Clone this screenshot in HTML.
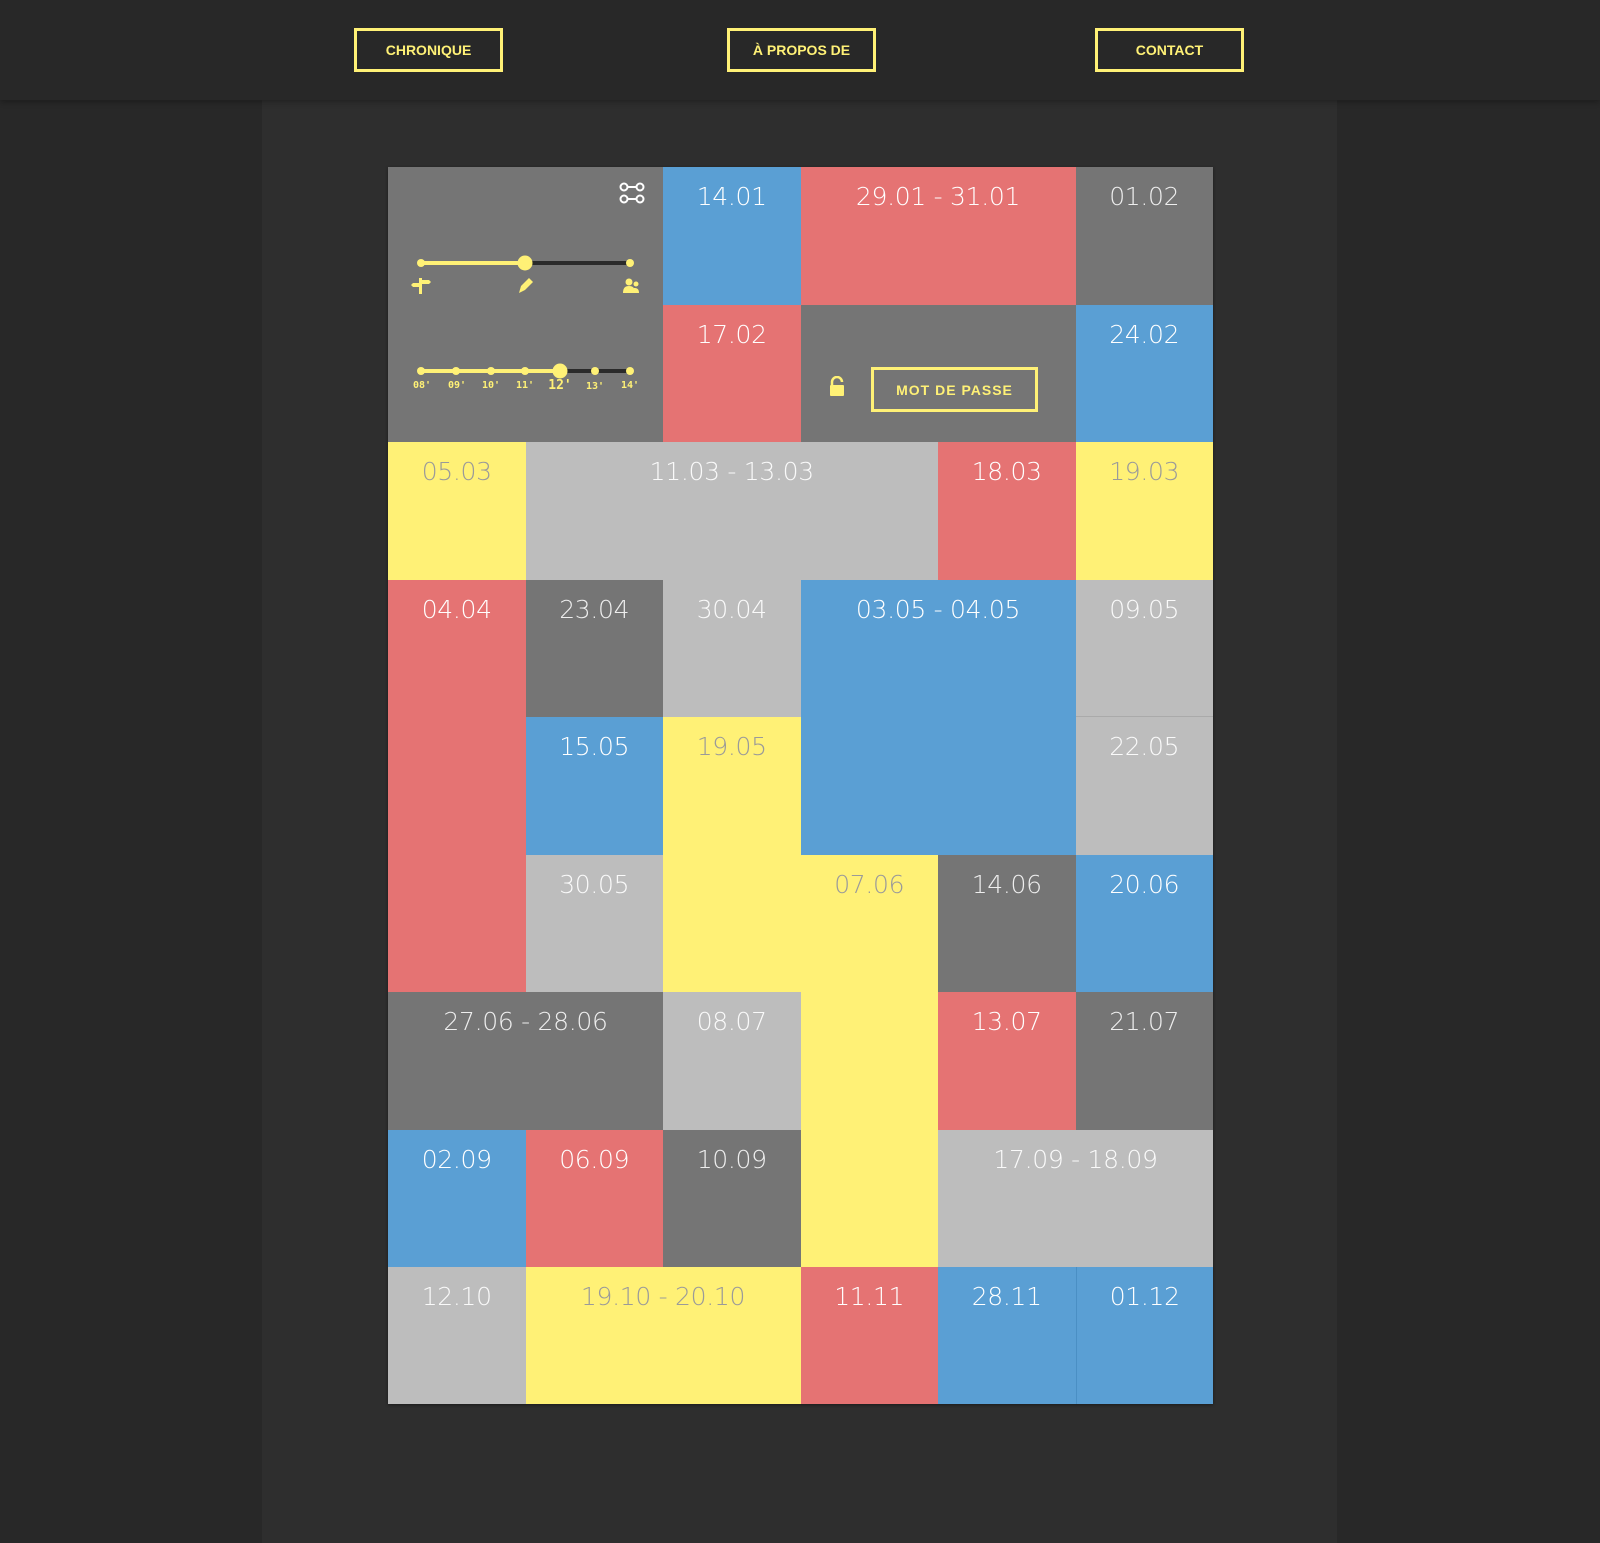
<!DOCTYPE html>
<html><head><meta charset="utf-8"><style>
*{margin:0;padding:0;box-sizing:border-box}
body{width:1600px;height:1543px;background:#282828;position:relative;overflow:hidden;font-family:"Liberation Sans",sans-serif}
.hdr{position:absolute;left:0;top:0;width:1600px;height:100px;background:#282828;box-shadow:0 2px 6px rgba(0,0,0,.3);z-index:2}
.btn{position:absolute;top:28px;width:149px;height:44px;border:3px solid #fff176;color:#fff176;font-weight:bold;font-size:14px;display:flex;align-items:center;justify-content:center}
.main{position:absolute;left:262px;top:100px;width:1075px;height:1443px;background:#2e2e2e}
.c{position:absolute;color:#fff;font-size:27px;text-align:center;padding-top:14px;font-weight:normal}
.b{background:#5a9fd4}.r{background:#e57373}.y{background:#fff176;color:#9a9a9a}.d{background:#757575;color:#eee}.l{background:#bdbdbd;color:#fafafa}
.c span{font-family:"DejaVu Sans",sans-serif;font-weight:200;font-size:25px;letter-spacing:-0.3px}
</style></head><body>
<div class="hdr">
<div class="btn" style="left:354px">CHRONIQUE</div>
<div class="btn" style="left:727px">À PROPOS DE</div>
<div class="btn" style="left:1095px">CONTACT</div>
</div>
<div class="main"></div>
<div id="g" style="position:absolute;left:388px;top:167px;width:825px;height:1237px;box-shadow:0 1px 3px rgba(0,0,0,.4)">
<div class="c d" style="left:0;top:0;width:275px;height:275px"></div>
<div class="c b" style="left:275px;top:0;width:137.5px;height:137.5px"><span>14.01</span></div>
<div class="c r" style="left:412.5px;top:0;width:275px;height:137.5px"><span>29.01 - 31.01</span></div>
<div class="c d" style="left:687.5px;top:0;width:137.5px;height:137.5px"><span>01.02</span></div>
<div class="c r" style="left:275px;top:137.5px;width:137.5px;height:137.5px"><span>17.02</span></div>
<div class="c d" style="left:412.5px;top:137.5px;width:275px;height:137.5px"></div>
<div class="c b" style="left:687.5px;top:137.5px;width:137.5px;height:137.5px"><span>24.02</span></div>
<div class="c y" style="left:0;top:275px;width:137.5px;height:137.5px"><span>05.03</span></div>
<div class="c l" style="left:137.5px;top:275px;width:412.5px;height:137.5px"><span>11.03 - 13.03</span></div>
<div class="c r" style="left:550px;top:275px;width:137.5px;height:137.5px"><span>18.03</span></div>
<div class="c y" style="left:687.5px;top:275px;width:137.5px;height:137.5px"><span>19.03</span></div>
<div class="c r" style="left:0;top:412.5px;width:137.5px;height:412.5px"><span>04.04</span></div>
<div class="c d" style="left:137.5px;top:412.5px;width:137.5px;height:137.5px"><span>23.04</span></div>
<div class="c l" style="left:275px;top:412.5px;width:137.5px;height:137.5px"><span>30.04</span></div>
<div class="c b" style="left:412.5px;top:412.5px;width:275px;height:275px"><span>03.05 - 04.05</span></div>
<div class="c l" style="left:687.5px;top:412.5px;width:137.5px;height:137.5px;border-bottom:1px solid #aaa"><span>09.05</span></div>
<div class="c b" style="left:137.5px;top:550px;width:137.5px;height:137.5px"><span>15.05</span></div>
<div class="c y" style="left:275px;top:550px;width:137.5px;height:275px"><span>19.05</span></div>
<div class="c l" style="left:687.5px;top:550px;width:137.5px;height:137.5px"><span>22.05</span></div>
<div class="c l" style="left:137.5px;top:687.5px;width:137.5px;height:137.5px"><span>30.05</span></div>
<div class="c y" style="left:412.5px;top:687.5px;width:137.5px;height:412.5px"><span>07.06</span></div>
<div class="c d" style="left:550px;top:687.5px;width:137.5px;height:137.5px"><span>14.06</span></div>
<div class="c b" style="left:687.5px;top:687.5px;width:137.5px;height:137.5px"><span>20.06</span></div>
<div class="c d" style="left:0;top:825px;width:275px;height:137.5px"><span>27.06 - 28.06</span></div>
<div class="c l" style="left:275px;top:825px;width:137.5px;height:137.5px"><span>08.07</span></div>
<div class="c r" style="left:550px;top:825px;width:137.5px;height:137.5px"><span>13.07</span></div>
<div class="c d" style="left:687.5px;top:825px;width:137.5px;height:137.5px"><span>21.07</span></div>
<div class="c b" style="left:0;top:962.5px;width:137.5px;height:137.5px"><span>02.09</span></div>
<div class="c r" style="left:137.5px;top:962.5px;width:137.5px;height:137.5px"><span>06.09</span></div>
<div class="c d" style="left:275px;top:962.5px;width:137.5px;height:137.5px"><span>10.09</span></div>
<div class="c l" style="left:550px;top:962.5px;width:275px;height:137.5px"><span>17.09 - 18.09</span></div>
<div class="c l" style="left:0;top:1100px;width:137.5px;height:137px"><span>12.10</span></div>
<div class="c y" style="left:137.5px;top:1100px;width:275px;height:137px"><span>19.10 - 20.10</span></div>
<div class="c r" style="left:412.5px;top:1100px;width:137.5px;height:137px"><span>11.11</span></div>
<div class="c b" style="left:550px;top:1100px;width:137.5px;height:137px"><span>28.11</span></div>
<div class="c b" style="left:687.5px;top:1100px;width:137.5px;height:137px;border-left:1px solid #4a8fc4"><span>01.12</span></div>
<svg style="position:absolute;left:0;top:0" width="275" height="275">
<g stroke="#fff" stroke-width="2" fill="none"><circle cx="236" cy="20" r="3.5"/><circle cx="252" cy="20" r="3.5"/><line x1="239" y1="20" x2="249" y2="20"/><circle cx="236" cy="32" r="3.5"/><circle cx="252" cy="32" r="3.5"/><line x1="239" y1="32" x2="249" y2="32"/></g>
<line x1="33" y1="96" x2="137" y2="96" stroke="#fff176" stroke-width="4"/>
<line x1="137" y1="96" x2="242" y2="96" stroke="#2a2a2a" stroke-width="4"/>
<circle cx="33" cy="96" r="4" fill="#fff176"/><circle cx="137" cy="96" r="7.5" fill="#fff176"/><circle cx="242" cy="96" r="4" fill="#fff176"/>
<g fill="#fff176"><rect x="31" y="111" width="3" height="16"/><path d="M25 116h8v4h-8l-2-2z"/><path d="M34 113h7l2 2-2 2h-7z"/>
<path d="M131 126l2-7 8-8 4 4-8 8z"/>
<circle cx="241" cy="115" r="3.5"/><path d="M235 126c0-5 2-7 6-7s6 2 6 7z"/><circle cx="248" cy="117" r="2.5"/><path d="M246 126v-5c3 0 5 1 5 5z"/></g>
<line x1="33" y1="204" x2="172" y2="204" stroke="#fff176" stroke-width="4"/>
<line x1="172" y1="204" x2="242" y2="204" stroke="#2a2a2a" stroke-width="4"/>
<g fill="#fff176"><circle cx="33" cy="204" r="4"/><circle cx="68" cy="204" r="4"/><circle cx="103" cy="204" r="4"/><circle cx="137" cy="204" r="4"/><circle cx="172" cy="204" r="7.5"/><circle cx="207" cy="204" r="4"/><circle cx="242" cy="204" r="4"/></g>
<g fill="#fff176" font-family="DejaVu Sans Mono,monospace" font-weight="bold" font-size="10" text-anchor="middle"><text x="34" y="221">08'</text><text x="69" y="221">09'</text><text x="103" y="221">10'</text><text x="137" y="221">11'</text><text x="172" y="222" font-size="13">12'</text><text x="207" y="222">13'</text><text x="242" y="221">14'</text></g>
</svg>
<svg style="position:absolute;left:440px;top:209px" width="20" height="22"><path d="M4 9V6a5 5 0 0 1 10 0" stroke="#fff176" stroke-width="2.5" fill="none"/><rect x="2" y="9" width="14" height="11" rx="1" fill="#fff176"/></svg>
<div style="position:absolute;left:483px;top:200px;width:167px;height:45px;border:3px solid #fff176;color:#fff176;font-weight:bold;font-size:14px;letter-spacing:1px;display:flex;align-items:center;justify-content:center">MOT DE PASSE</div>
</div>
</body></html>
